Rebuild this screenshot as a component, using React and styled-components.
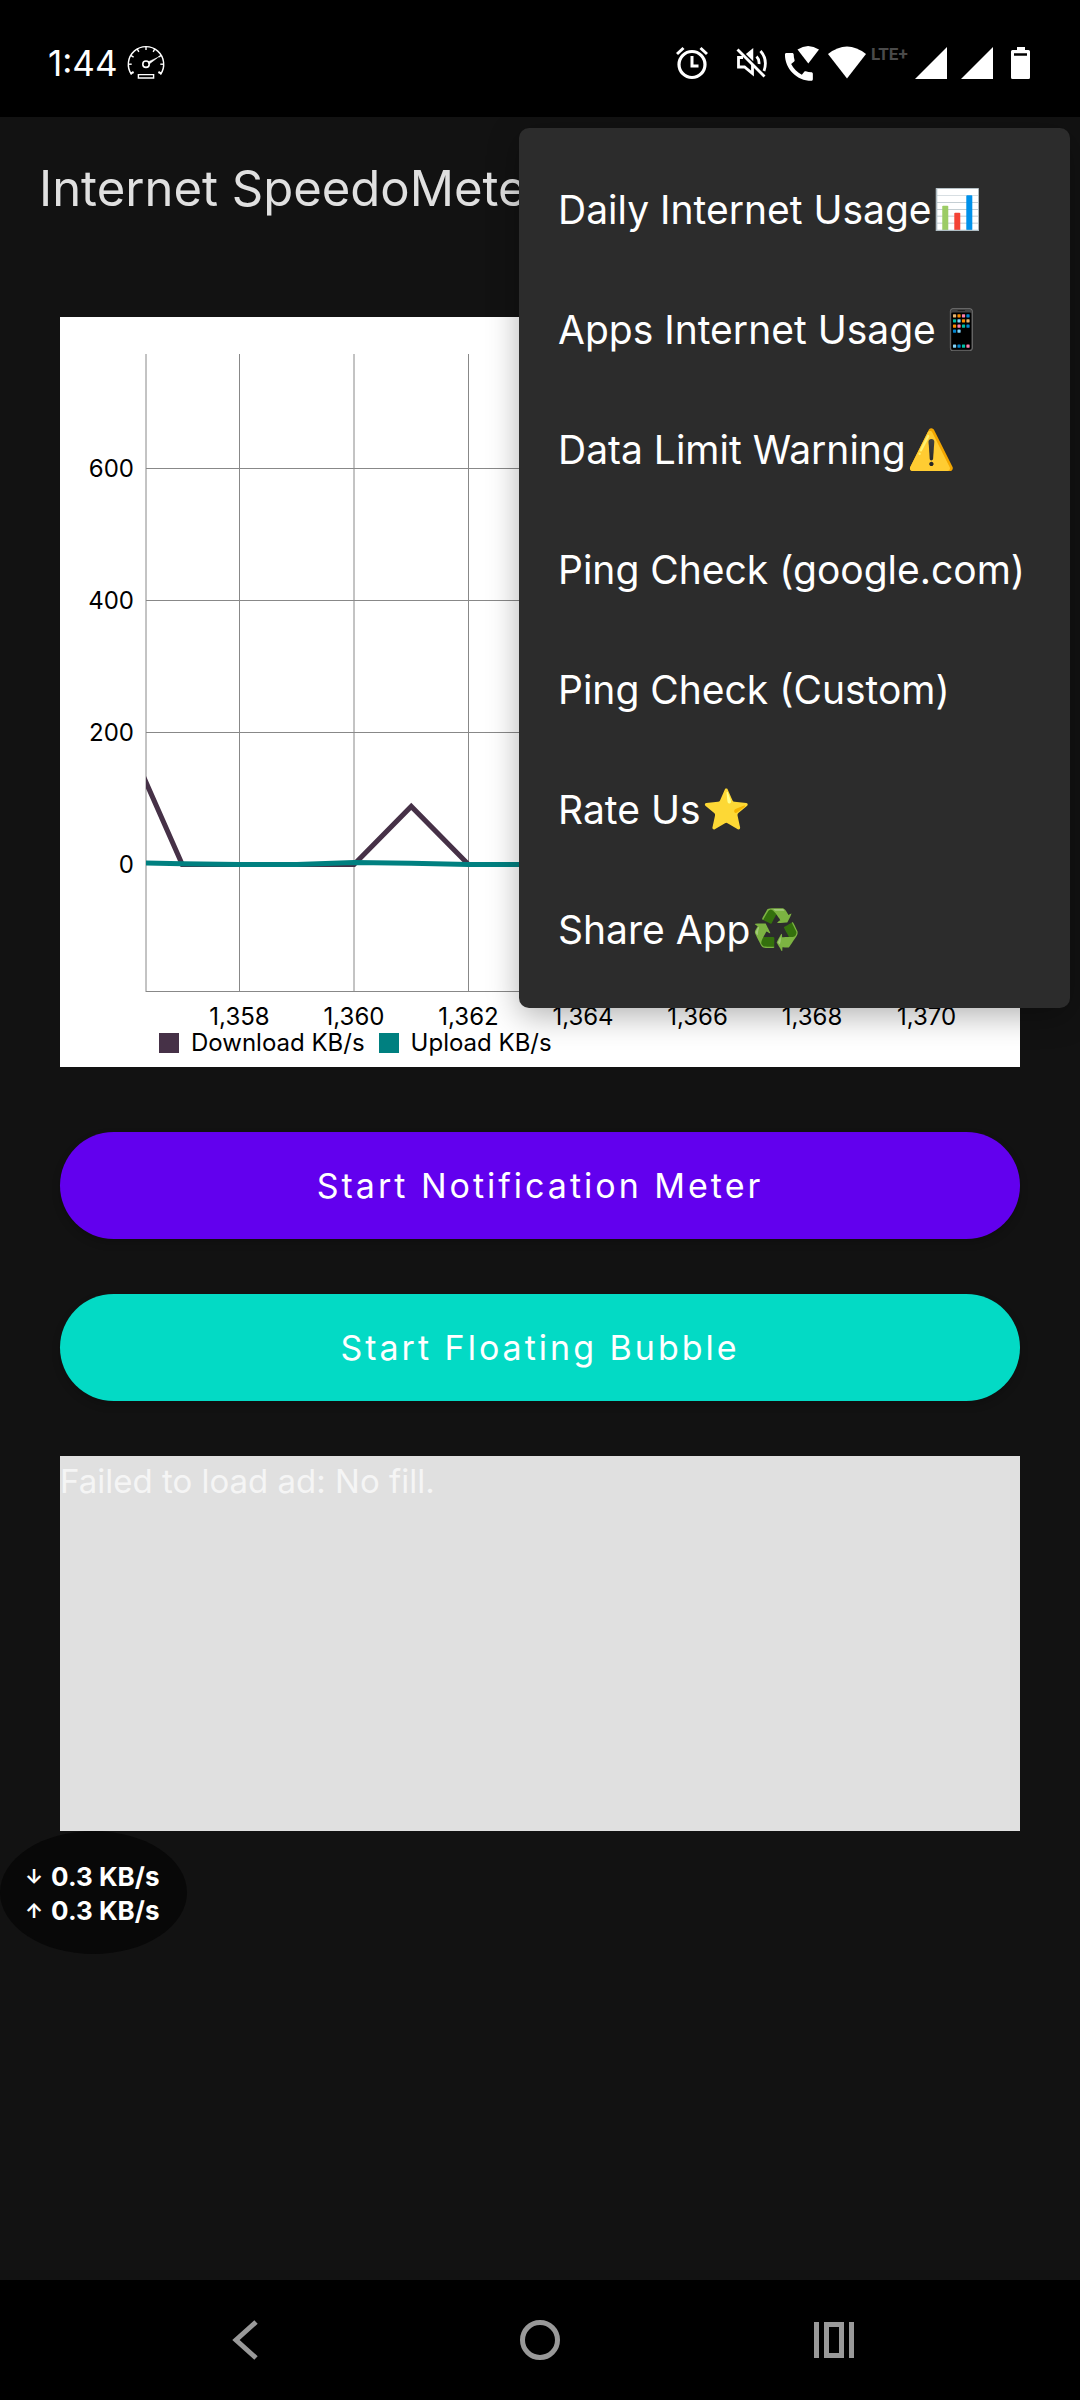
import React from 'react';
import styled, { createGlobalStyle } from 'styled-components';

const Global = createGlobalStyle`
  *, *::before, *::after { box-sizing: border-box; }
  body {
    margin: 0;
    background: #121212;
    color: #fff;
    font-family: Inter, "Noto Sans", sans-serif;
  }
  button { font: inherit; color: inherit; border: 0; padding: 0; cursor: pointer; }
`;

const Screen = styled.div`
  position: relative;
  display: flex;
  flex-direction: column;
  min-height: 100vh;
  overflow: hidden;
`;

const StatusBar = styled.header`
  display: flex;
  align-items: center;
  justify-content: space-between;
  height: 117px;
  padding: 8px 50px 0 48px;
  background: #000;
`;

const Time = styled.div`
  display: flex;
  align-items: center;
  gap: 8px;
  font-size: 35px;
  line-height: 40px;
`;

const StatusIcons = styled.div`
  display: flex;
  align-items: center;
`;

const StatusIcon = styled.svg`
  display: block;
  flex: none;
  width: ${p => p.$w}px;
  height: 36px;
  margin-left: ${p => p.$gap || 0}px;
`;

const Network = styled.span`
  align-self: flex-start;
  margin-left: 5px;
  width: 38px;
  font: 700 17px/18px Roboto, sans-serif;
  color: #4a4a4a;
`;

const AppBar = styled.div`
  display: flex;
  align-items: center;
  height: 143px;
  padding: 0 39px;
`;

const Title = styled.h1`
  margin: 0;
  font-size: 49px;
  font-weight: 400;
  line-height: 58px;
  white-space: nowrap;
  color: #e0e0e0;
`;

const Main = styled.main`
  flex: 1;
  display: flex;
  flex-direction: column;
  gap: 55px;
  padding: 57px 60px;
`;

const ChartCard = styled.section`
  margin-bottom: 10px;
  padding-bottom: 13px;
  background: #fff;
  color: #000;
`;

const Plot = styled.svg`
  display: block;
  width: 100%;
  height: auto;
  font-size: 24px;
`;

const Legend = styled.div`
  display: flex;
  gap: 14px;
  padding-left: 99px;
  font-size: 24px;
  line-height: 22px;
`;

const LegendItem = styled.span`
  display: flex;
  align-items: center;
  gap: 12px;
  &::before {
    content: "";
    width: 20px;
    height: 20px;
    background: ${p => p.$color};
  }
`;

const ActionButton = styled.button`
  height: 107px;
  border-radius: 54px;
  background: ${p => p.$color};
  box-shadow: 0 4px 8px rgba(0, 0, 0, 0.2);
  font-size: 34px;
  line-height: 40px;
  letter-spacing: 3px;
`;

const AdSlot = styled.div`
  height: 375px;
  padding-top: 5px;
  background: #e0e0e0;
  color: #f5f5f5;
  font-size: 33px;
  line-height: 40px;
`;

const Menu = styled.div`
  position: absolute;
  top: 128px;
  right: 10px;
  width: 551px;
  padding: 22px 0 18px;
  display: flex;
  flex-direction: column;
  border-radius: 10px;
  background: #2c2c2c;
  box-shadow: 0 8px 32px rgba(0, 0, 0, 0.3);
`;

const MenuItem = styled.button`
  display: flex;
  align-items: center;
  height: 120px;
  padding: 0 39px;
  background: none;
  font-size: 39px;
  line-height: 48px;
  white-space: nowrap;
`;

const Emoji = styled.span`
  margin-left: 2px;
  font-family: "Noto Color Emoji", sans-serif;
`;

const Bubble = styled.div`
  position: absolute;
  top: 1831px;
  left: 0;
  display: flex;
  flex-direction: column;
  justify-content: center;
  width: 187px;
  height: 123px;
  padding: 2px 0 0 25px;
  border-radius: 50%;
  background: #080808;
  font-size: 26px;
  font-weight: 700;
  line-height: 34px;
  white-space: nowrap;
`;

const Rate = styled.span`
  display: flex;
  gap: 8px;
`;

const Arrow = styled.span`
  font-size: 20px;
`;

const NavBar = styled.nav`
  display: grid;
  grid-template-columns: repeat(3, 1fr);
  height: 120px;
  padding: 0 98px;
  background: #000;
`;

const NavButton = styled.button`
  display: grid;
  place-items: center;
  background: none;
  color: #999;
  svg {
    width: 44px;
    height: 44px;
    fill: none;
    stroke: currentColor;
    stroke-width: 5;
  }
`;

const menu = [
  ['Daily Internet Usage', '📊'],
  ['Apps Internet Usage', '📱'],
  ['Data Limit Warning', '⚠️'],
  ['Ping Check (google.com)'],
  ['Ping Check (Custom)'],
  ['Rate Us', '⭐'],
  ['Share App', '♻️'],
];

const DOWNLOAD = '#463147';
const UPLOAD = '#008080';

const xOf = t => 179.5 + (t - 1358) * 57.25;
const yOf = v => 547.5 - v * 0.66;
const toPoints = data => data.map(([t, v]) => `${xOf(t)},${yOf(v)}`).join(' ');

const download = [[1356, 197], [1357, 0], [1360, 0], [1361, 88], [1362, 0], [1371, 0]];
const upload = [[1356, 3], [1357, 1], [1358, 0], [1359, 0], [1360, 3], [1361, 2], [1362, 0], [1371, 0]];

function Gauge() {
  const ticks = [-90, -60, -30, 0, 30, 60, 90];
  return (
    <StatusIcon $w={40} viewBox="0 0 40 36" fill="none" stroke="#fff" strokeWidth="1.4" aria-hidden="true">
      <path d="M5.5 29.5A17.7 17.7 0 1 1 34.5 29.5" />
      {ticks.map(a => <path key={a} d="M20 1.5v3.4" transform={`rotate(${a} 20 19.2)`} />)}
      <path d="M4.6 28.6l3-1.6M35.4 28.6l-3-1.6" strokeWidth="2" />
      <circle cx="20" cy="19.2" r="3.2" strokeWidth="1.6" />
      <path d="M22 17l9.8-4.6-8.6 6.6z" fill="#fff" strokeWidth=".6" />
      <path d="M12.4 29.6h15.2v3.4H12.4z" />
    </StatusIcon>
  );
}

function Signal({ gap }) {
  return <StatusIcon $w={32} $gap={gap} viewBox="0 0 32 36" aria-hidden="true"><path d="M32 2v32H0z" fill="#fff" /></StatusIcon>;
}

function Chart() {
  return (
    <ChartCard aria-label="Internet speed">
      <Plot viewBox="0 0 960 715">
        <defs><clipPath id="plot-area"><rect x="86" y="37" width="834" height="638" /></clipPath></defs>
        <g stroke="#888" strokeWidth="1">
          <path d="M86 37V675" />
          {[1358, 1360, 1362, 1364, 1366, 1368, 1370].map(t => <path key={t} d={`M${xOf(t)} 37V675`} />)}
          {[0, 200, 400, 600].map(v => <path key={v} d={`M86 ${yOf(v)}H920`} />)}
          <path d="M86 674.5H920" />
        </g>
        <g fill="none" strokeWidth="5" clipPath="url(#plot-area)">
          <polyline points={toPoints(download)} stroke={DOWNLOAD} />
          <polyline points={toPoints(upload)} stroke={UPLOAD} />
        </g>
        <g textAnchor="end">
          {[0, 200, 400, 600].map(v => <text key={v} x="74" y={yOf(v) + 8}>{v}</text>)}
        </g>
        <g textAnchor="middle">
          {[1358, 1360, 1362, 1364, 1366, 1368, 1370].map(t => (
            <text key={t} x={xOf(t)} y="708">{t.toLocaleString('en-US')}</text>
          ))}
        </g>
      </Plot>
      <Legend>
        <LegendItem $color={DOWNLOAD}>Download KB/s</LegendItem>
        <LegendItem $color={UPLOAD}>Upload KB/s</LegendItem>
      </Legend>
    </ChartCard>
  );
}

export default function App() {
  return (
    <>
      <Global />
      <Screen>
        <StatusBar>
          <Time>1:44<Gauge /></Time>
          <StatusIcons>
            <StatusIcon $w={32} viewBox="0 0 32 36" fill="none" stroke="#fff" strokeWidth="3.2" aria-hidden="true">
              <circle cx="16" cy="19.5" r="13" />
              <path d="M16 11v10h6.5" strokeWidth="3" />
              <path d="M1 9l6.5-6M31 9l-6.5-6" strokeWidth="3" />
            </StatusIcon>
            <StatusIcon $w={32} $gap={28} viewBox="0 0 32 36" fill="none" stroke="#fff" strokeWidth="2.8" aria-hidden="true">
              <path d="M7 12.5H2.5v9.5h6l8 6.5V20" />
              <path d="M11 9l5.5-4.5v10z" fill="#fff" strokeWidth="1.5" />
              <path d="M1.5 4.5l27 27" />
              <path d="M20.5 11.5q3 3 2.5 7.5M24.5 6q7.5 8.5 3.5 20" />
            </StatusIcon>
            <StatusIcon $w={35} $gap={16} viewBox="0 0 35 36" fill="#fff" aria-hidden="true">
              <path transform="translate(-3.7 3.3) scale(1.55)" d="M20.01 15.38c-1.23 0-2.42-.2-3.53-.56-.35-.12-.74-.03-1.01.24l-1.57 1.97c-2.83-1.35-5.48-3.9-6.89-6.83l1.95-1.66c.27-.28.35-.67.24-1.02-.37-1.11-.56-2.3-.56-3.53 0-.54-.45-.99-.99-.99H4.19C3.65 3 3 3.24 3 3.99 3 13.28 10.73 21 20.01 21c.71 0 .99-.63.99-1.18v-3.45c0-.54-.45-.99-.99-.99z" />
              <path d="M13.5 4.5Q24 -2.5 35 4.5L24.3 18.5z" />
            </StatusIcon>
            <StatusIcon $w={38} $gap={9} viewBox="0 0 38 36" fill="#fff" aria-hidden="true">
              <path d="M0 9Q19 -6 38 9L19 33.5z" />
            </StatusIcon>
            <Network>LTE+</Network>
            <Signal gap={6} />
            <Signal gap={14} />
            <StatusIcon $w={19} $gap={18} viewBox="0 0 19 36" aria-hidden="true">
              <path d="M6 2h8v3h3.5q1.5 0 1.5 1.5v26q0 1.5-1.5 1.5h-16Q0 34 0 32.5v-26Q0 5 1.5 5H6z" fill="#fff" />
              <path d="M3 9.5h13" stroke="#000" strokeWidth="2.5" />
            </StatusIcon>
          </StatusIcons>
        </StatusBar>
        <AppBar><Title>Internet SpeedoMeter</Title></AppBar>
        <Main>
          <Chart />
          <ActionButton $color="#6200ee">Start Notification Meter</ActionButton>
          <ActionButton $color="#03dac5">Start Floating Bubble</ActionButton>
          <AdSlot>Failed to load ad: No fill.</AdSlot>
        </Main>
        <NavBar>
          <NavButton aria-label="Back"><svg viewBox="0 0 44 44"><path d="M33 4L13 22l20 18" /></svg></NavButton>
          <NavButton aria-label="Home"><svg viewBox="0 0 44 44"><circle cx="22" cy="22" r="17.5" /></svg></NavButton>
          <NavButton aria-label="Recent apps">
            <svg viewBox="0 0 44 44"><path d="M3.500 4v36M38.500 4v36M13.500 6.500h15v31h-15z" /></svg>
          </NavButton>
        </NavBar>
        <Bubble>
          <Rate><Arrow>↓</Arrow>0.3 KB/s</Rate>
          <Rate><Arrow>↑</Arrow>0.3 KB/s</Rate>
        </Bubble>
        <Menu role="menu">
          {menu.map(([label, emoji]) => (
            <MenuItem key={label} role="menuitem">
              {label}{emoji && <Emoji>{emoji}</Emoji>}
            </MenuItem>
          ))}
        </Menu>
      </Screen>
    </>
  );
}
